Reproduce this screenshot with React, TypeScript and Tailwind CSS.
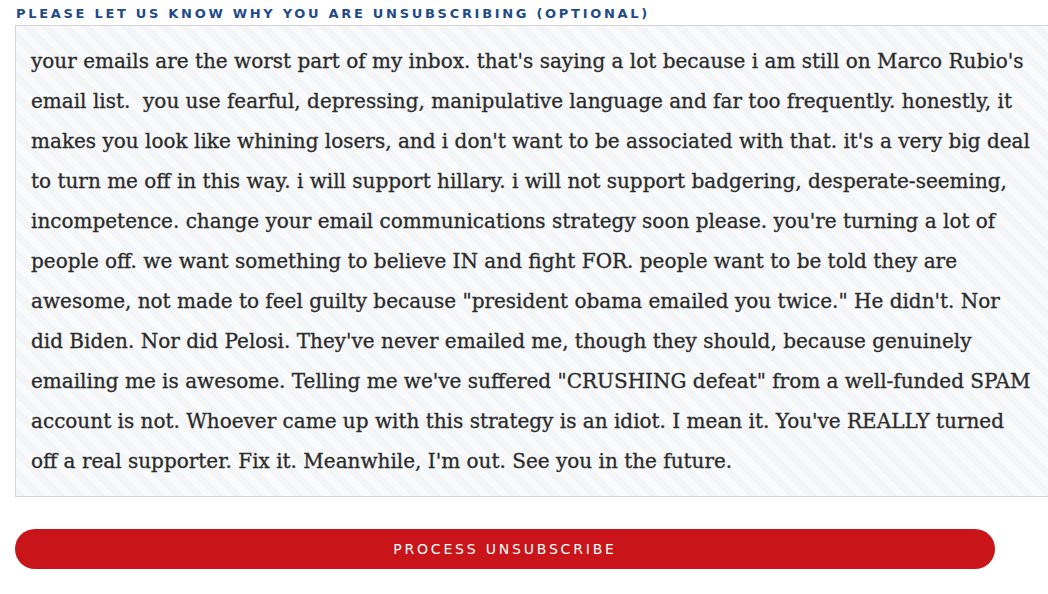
import React from "react";

const lines = [
  "your emails are the worst part of my inbox. that's saying a lot because i am still on Marco Rubio's",
  "email list.  you use fearful, depressing, manipulative language and far too frequently. honestly, it",
  "makes you look like whining losers, and i don't want to be associated with that. it's a very big deal",
  "to turn me off in this way. i will support hillary. i will not support badgering, desperate-seeming,",
  "incompetence. change your email communications strategy soon please. you're turning a lot of",
  "people off. we want something to believe IN and fight FOR. people want to be told they are",
  "awesome, not made to feel guilty because \"president obama emailed you twice.\" He didn't. Nor",
  "did Biden. Nor did Pelosi. They've never emailed me, though they should, because genuinely",
  "emailing me is awesome. Telling me we've suffered \"CRUSHING defeat\" from a well-funded SPAM",
  "account is not. Whoever came up with this strategy is an idiot. I mean it. You've REALLY turned",
  "off a real supporter. Fix it. Meanwhile, I'm out. See you in the future.",
];

export default function App() {
  return (
    <div className="w-[1048px] h-[594px] overflow-hidden bg-white font-['DejaVu_Sans',sans-serif]">
      <div className="pl-[15px] pt-[7px]">
        <label className="block pl-px text-[13px] leading-[14px] font-bold tracking-[2.7px] text-[#1d4b8a] uppercase">
          Please let us know why you are unsubscribing (optional)
        </label>
        <div className="mt-[4px] w-[1060px] h-[472px] border border-[#d4d4d4] bg-[repeating-linear-gradient(45deg,#f3f4f6_0px,#f3f4f6_7px,#f9fafb_7px,#f9fafb_14px)] pl-[15px] pt-[15px]">
          <div className="font-['DejaVu_Serif',serif] text-[20px] leading-[40px] text-[#2a2a2a] [-webkit-text-stroke:0.3px_#2a2a2a]">
            {lines.map((l, i) => (
              <div key={i} className="whitespace-pre">
                {l}
              </div>
            ))}
          </div>
        </div>
        <button className="mt-[32px] w-[980px] h-[40px] rounded-full bg-[#c91419] text-white text-[14px] tracking-[2.8px] uppercase">
          Process unsubscribe
        </button>
      </div>
    </div>
  );
}
